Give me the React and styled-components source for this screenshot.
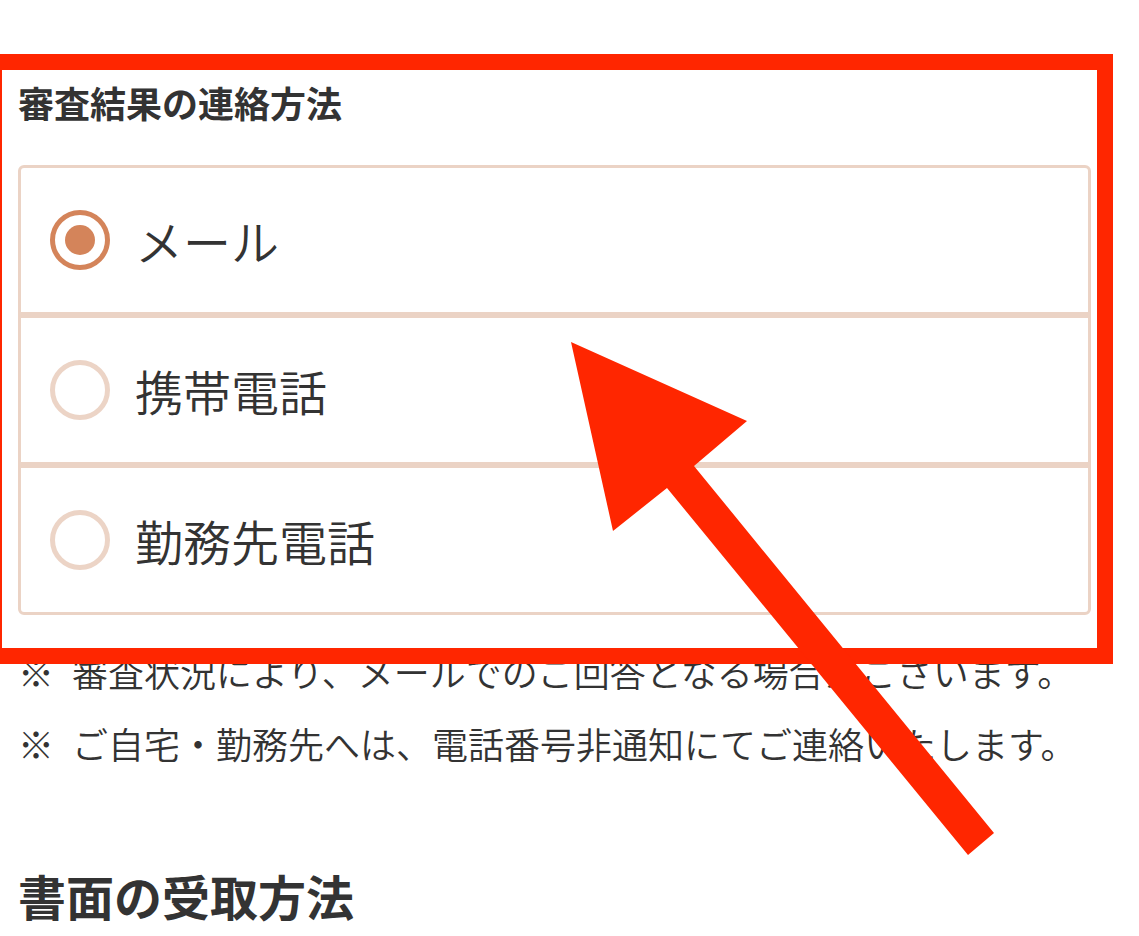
import React, { useState } from "react";
import styled, { createGlobalStyle } from "styled-components";

const GlobalStyle = createGlobalStyle`
  html, body {
    margin: 0;
    padding: 0;
    background: #fff;
    overflow: hidden;
  }
  body {
    font-family: "Noto Sans CJK JP", "Noto Sans", sans-serif;
    color: #333;
  }
`;

const Page = styled.div`
  position: relative;
  width: 1139px;
  height: 936px;
  overflow: hidden;
  padding: 75px 18px 0 18px;
  box-sizing: border-box;
`;

const Label = styled.div`
  font-size: 36px;
  line-height: 54px;
  font-weight: 700;
  color: #333;
  margin-bottom: 36px;
`;

const Options = styled.div`
  width: 1073px;
  display: flex;
  flex-direction: column;
`;

const Option = styled.label`
  height: 150px;
  box-sizing: border-box;
  border: 3px solid #ebd3c5;
  display: flex;
  align-items: center;
  padding-left: 29px;
  gap: 25px;
  cursor: pointer;

  &:first-child {
    border-radius: 6px 6px 0 0;
  }
  &:last-child {
    border-radius: 0 0 6px 6px;
  }

  input {
    display: none;
  }
`;

const Radio = styled.span`
  width: 60px;
  height: 60px;
  box-sizing: border-box;
  border-radius: 50%;
  border: 5px solid ${(p) => (p.$checked ? "#d4845a" : "#ecd4c6")};
  display: flex;
  align-items: center;
  justify-content: center;
  flex-shrink: 0;

  &::after {
    content: "";
    width: 30px;
    height: 30px;
    border-radius: 50%;
    background: #d4845a;
    display: ${(p) => (p.$checked ? "block" : "none")};
  }
`;

const OptionText = styled.span`
  font-size: 48px;
  line-height: 1;
  font-weight: 350;
  color: #333;
`;

const Notes = styled.ul`
  list-style: none;
  margin: 20px 0 0 0;
  padding: 0;
`;

const Note = styled.li`
  display: flex;
  font-size: 36px;
  line-height: 72px;
  font-weight: 350;
  color: #333;
`;

const Mark = styled.span`
  width: 54px;
  flex-shrink: 0;
`;

const Heading = styled.h2`
  margin: 80px 0 0 0;
  font-size: 48px;
  line-height: 72px;
  font-weight: 700;
  color: #333;
`;

// annotation overlays
const Frame = styled.div`
  position: absolute;
  left: -14px;
  top: 54px;
  width: 1127px;
  height: 610px;
  box-sizing: border-box;
  border: 16px solid #ff2600;
  pointer-events: none;
`;

const ArrowLayer = styled.svg`
  position: absolute;
  left: 0;
  top: 0;
  pointer-events: none;
`;

const options = ["メール", "携帯電話", "勤務先電話"];

const notes = [
  "審査状況により、メールでのご回答となる場合がございます。",
  "ご自宅・勤務先へは、電話番号非通知にてご連絡いたします。",
];

export default function App() {
  const [selected, setSelected] = useState(0);

  return (
    <Page>
      <GlobalStyle />
      <Label>審査結果の連絡方法</Label>
      <Options>
        {options.map((o, i) => (
          <Option key={o}>
            <input
              type="radio"
              name="contact"
              checked={selected === i}
              onChange={() => setSelected(i)}
            />
            <Radio $checked={selected === i} />
            <OptionText>{o}</OptionText>
          </Option>
        ))}
      </Options>
      <Notes>
        {notes.map((n) => (
          <Note key={n}>
            <Mark>※</Mark>
            <span>{n}</span>
          </Note>
        ))}
      </Notes>
      <Heading>書面の受取方法</Heading>

      <Frame />
      <ArrowLayer width="1139" height="936" viewBox="0 0 1139 936">
        <polygon
          fill="#ff2600"
          points="571,342 747,421 694,466 994,833 968,855 667,488 613,531"
        />
      </ArrowLayer>
    </Page>
  );
}
